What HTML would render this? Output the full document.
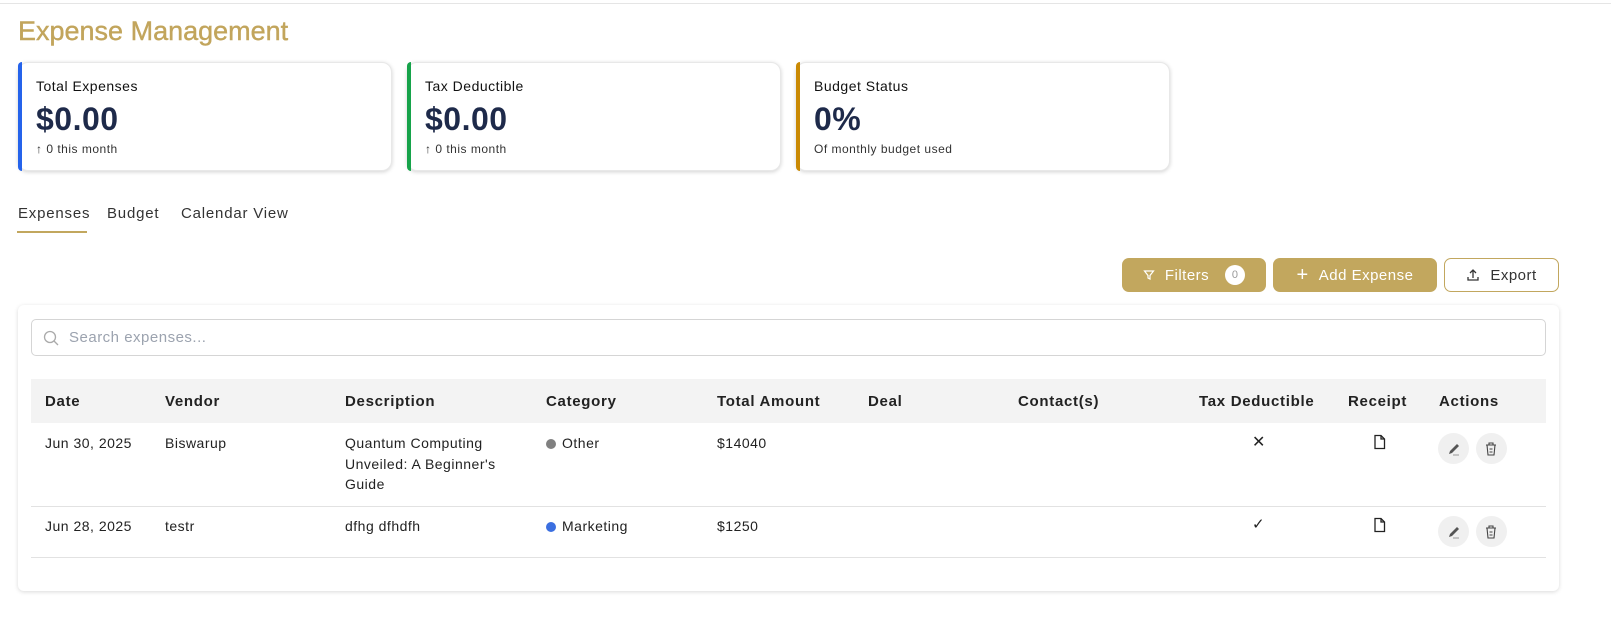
<!DOCTYPE html>
<html><head><style>
*{box-sizing:border-box;margin:0;padding:0}
body{width:1611px;height:621px;background:#fff;font-family:"Liberation Sans",sans-serif;color:#1f2937;position:relative;overflow:hidden;letter-spacing:0.5px}
.a{position:absolute}
.top{left:0;top:0;width:1611px;height:4px;border-bottom:1px solid #e5e5e5}
h1{position:absolute;left:18px;top:16px;font-size:27px;font-weight:normal;color:#c2a55c;letter-spacing:0;-webkit-text-stroke:0.4px #c2a55c}
.card{position:absolute;top:62px;width:374px;height:109px;border-radius:10px;background:#fff;box-shadow:0 1px 4px rgba(0,0,0,.18);border:1px solid #e8e8e8}
.card .l{position:absolute;left:-1px;top:-1px;bottom:-1px;width:4px;border-radius:10px 0 0 10px}
.card .t{position:absolute;left:17px;top:15px;font-size:14px;color:#111}
.card .v{position:absolute;left:17px;top:38px;font-size:32px;font-weight:bold;color:#1e2a4a}
.card .s{position:absolute;left:17px;top:79px;font-size:12px;color:#333}
.tab{position:absolute;top:205px;font-size:15px;color:#333;letter-spacing:0.8px}
.btn{position:absolute;top:258px;height:34px;border-radius:7px;background:#c2a75e;color:#fff;font-size:15px;display:flex;align-items:center;justify-content:center;gap:10px}
.panel{position:absolute;left:18px;top:305px;width:1541px;height:286px;background:#fff;box-shadow:0 1px 4px rgba(0,0,0,.15);border-radius:6px}
.search{position:absolute;left:31px;top:319px;width:1515px;height:37px;border:1px solid #d5d5d5;border-radius:5px}
.thead{position:absolute;left:31px;top:379px;width:1515px;height:44px;background:#f3f3f3}
.th{position:absolute;top:393px;font-size:15px;font-weight:bold;color:#222;letter-spacing:0.7px}
.td{position:absolute;font-size:14px;color:#222;line-height:20.5px}
.line{position:absolute;left:31px;width:1515px;height:1px;background:#e2e2e2}
.circ{position:absolute;width:31px;height:31px;border-radius:50%;background:#f0f0f0}
.dot{display:inline-block;width:10px;height:10px;border-radius:50%;margin-right:6px;vertical-align:-1px}
</style></head><body>
<div class="a top"></div>
<h1>Expense Management</h1>
<div class="card" style="left:18px"><div class="l" style="background:#2563eb"></div><div class="t">Total Expenses</div><div class="v">$0.00</div><div class="s">↑ 0 this month</div></div>
<div class="card" style="left:407px"><div class="l" style="background:#16a34a"></div><div class="t">Tax Deductible</div><div class="v">$0.00</div><div class="s">↑ 0 this month</div></div>
<div class="card" style="left:796px"><div class="l" style="background:#ca8a04"></div><div class="t">Budget Status</div><div class="v">0%</div><div class="s">Of monthly budget used</div></div>
<div class="tab" style="left:18px">Expenses</div>
<div class="tab" style="left:107px">Budget</div>
<div class="tab" style="left:181px">Calendar View</div>
<div class="a" style="left:17px;top:231px;width:70px;height:2px;background:#c2a75e"></div>
<div class="btn" style="left:1122px;width:144px"><svg width="12" height="12" viewBox="0 0 12 12"><path d="M1.5 2h9L7 6.5V10L5 9V6.5z" fill="none" stroke="#fff" stroke-width="1.2"/></svg>Filters<span style="width:20px;height:20px;border-radius:50%;background:#fff;color:#999;font-size:11px;display:flex;align-items:center;justify-content:center;margin-left:6px">0</span></div>
<div class="btn" style="left:1273px;width:164px"><span style="font-size:20px;font-weight:300">+</span>Add Expense</div>
<div class="btn" style="left:1444px;width:115px;background:#fff;color:#333;border:1px solid #c2a75e"><svg width="14" height="14" viewBox="0 0 14 14"><path d="M7 10V2M4 5l3-3 3 3M2 9v3h10V9" fill="none" stroke="#333" stroke-width="1.3"/></svg>Export</div>
<div class="panel"></div>
<div class="search"><svg class="a" style="left:11px;top:10px" width="16" height="16" viewBox="0 0 16 16"><circle cx="7" cy="7" r="5.5" fill="none" stroke="#aaa" stroke-width="1.3"/><path d="M11 11l4 4" stroke="#aaa" stroke-width="1.3"/></svg><span class="a" style="left:37px;top:9px;font-size:15px;color:#9ca3af">Search expenses...</span></div>
<div class="thead"></div>
<div class="th" style="left:45px">Date</div><div class="th" style="left:165px">Vendor</div><div class="th" style="left:345px">Description</div><div class="th" style="left:546px">Category</div><div class="th" style="left:717px">Total Amount</div><div class="th" style="left:868px">Deal</div><div class="th" style="left:1018px">Contact(s)</div><div class="th" style="left:1199px">Tax Deductible</div><div class="th" style="left:1348px">Receipt</div><div class="th" style="left:1439px">Actions</div>
<div class="td" style="left:45px;top:433px">Jun 30, 2025</div>
<div class="td" style="left:165px;top:433px">Biswarup</div>
<div class="td" style="left:345px;top:433px;width:170px">Quantum Computing Unveiled: A Beginner's Guide</div>
<div class="td" style="left:546px;top:433px"><span class="dot" style="background:#808080"></span>Other</div>
<div class="td" style="left:717px;top:433px">$14040</div>
<div class="td" style="left:1252px;top:433px;font-size:16px">✕</div>
<div class="line" style="top:506px"></div>
<div class="td" style="left:45px;top:516px">Jun 28, 2025</div>
<div class="td" style="left:165px;top:516px">testr</div>
<div class="td" style="left:345px;top:516px">dfhg dfhdfh</div>
<div class="td" style="left:546px;top:516px"><span class="dot" style="background:#3b6fe0"></span>Marketing</div>
<div class="td" style="left:717px;top:516px">$1250</div>
<div class="td" style="left:1252px;top:515px;font-size:15px">✓</div>
<div class="line" style="top:557px"></div>
<svg class="a" style="left:1373px;top:434px" width="14" height="16" viewBox="0 0 14 16"><path d="M2 1.5h6l3.5 3.5v9.5H2z M8 1.5V5h3.5" fill="none" stroke="#222" stroke-width="1.3"/></svg>
<svg class="a" style="left:1373px;top:517px" width="14" height="16" viewBox="0 0 14 16"><path d="M2 1.5h6l3.5 3.5v9.5H2z M8 1.5V5h3.5" fill="none" stroke="#222" stroke-width="1.3"/></svg>
<div class="circ" style="left:1438px;top:433px"></div><div class="circ" style="left:1476px;top:433px"></div>
<div class="circ" style="left:1438px;top:516px"></div><div class="circ" style="left:1476px;top:516px"></div>
<svg class="a" style="left:1446px;top:441px" width="16" height="16" viewBox="0 0 16 16"><path d="M3 13l1-3 7-7 2 2-7 7z" fill="#555"/><path d="M7 14h6" stroke="#999"/></svg>
<svg class="a" style="left:1446px;top:524px" width="16" height="16" viewBox="0 0 16 16"><path d="M3 13l1-3 7-7 2 2-7 7z" fill="#555"/><path d="M7 14h6" stroke="#999"/></svg>
<svg class="a" style="left:1484px;top:441px" width="14" height="16" viewBox="0 0 14 16"><path d="M2 4h10M5 4V2h4v2M3 4l1 10h6l1-10M5.5 8h3M5.5 11h3" fill="none" stroke="#444" stroke-width="1.1"/></svg>
<svg class="a" style="left:1484px;top:524px" width="14" height="16" viewBox="0 0 14 16"><path d="M2 4h10M5 4V2h4v2M3 4l1 10h6l1-10M5.5 8h3M5.5 11h3" fill="none" stroke="#444" stroke-width="1.1"/></svg>
</body></html>
